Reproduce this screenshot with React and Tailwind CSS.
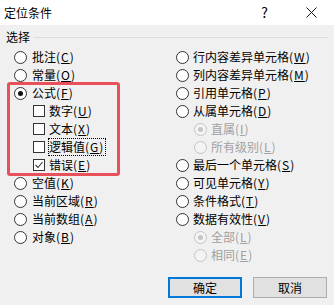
const font = { fontFamily: '"Noto Sans CJK SC", "Noto Sans", sans-serif' };

function Radio({ on, disabled }) {
  const ring = disabled ? 'border-[#c4c4c4] bg-[#f4f4f4]' : 'border-[#333] bg-white';
  return (
    <span className={`w-[13px] h-[13px] rounded-full border flex items-center justify-center shrink-0 ${ring}`}>
      {on && <span className={`w-[5px] h-[5px] rounded-full ${disabled ? 'bg-[#c4c4c4]' : 'bg-[#111]'}`} />}
    </span>
  );
}

function Check({ on }) {
  return (
    <span className="w-[12px] h-[12px] border border-[#333] bg-white shrink-0 flex items-center justify-center">
      {on && (
        <svg width="10" height="10" viewBox="0 0 10 10">
          <polyline points="1.5,5 4,7.5 8.5,2" fill="none" stroke="#333" strokeWidth="1.1" />
        </svg>
      )}
    </span>
  );
}

function Label({ text, k, disabled, focus }) {
  return (
    <span
      className={`text-[12px] leading-[16px] whitespace-nowrap ${disabled ? 'text-[#a0a0a0]' : 'text-black'} ${
        focus ? 'outline outline-1 outline-dotted outline-black outline-offset-0 pr-[1px]' : ''
      }`}
    >
      {text}
      <span className="tracking-[1px]">
        (<span className="underline">{k}</span>)
      </span>
    </span>
  );
}

function Row({ kind = 'radio', on, text, k, disabled, focus, indent = '', gap = 'gap-[5px]' }) {
  return (
    <div className={`h-[18px] flex items-center ${gap} ${indent}`}>
      {kind === 'radio' ? <Radio on={on} disabled={disabled} /> : <Check on={on} />}
      <Label text={text} k={k} disabled={disabled} focus={focus} />
    </div>
  );
}

export default function App() {
  return (
    <div className="w-[334px] h-[305px] bg-[#f0f0f0] flex flex-col overflow-hidden" style={font}>
      <div className="h-[25px] bg-white flex items-center pl-[4px] pr-[17px]">
        <span className="text-[12px] text-black">定位条件</span>
        <span className="ml-auto text-[14px] text-black mr-[38px]">?</span>
        <svg width="11" height="11" viewBox="0 0 11 11">
          <path d="M0.5 0.5 L10.5 10.5 M10.5 0.5 L0.5 10.5" stroke="#111" strokeWidth="1" />
        </svg>
      </div>

      <div className="pt-[3px] flex items-center h-[21px] pl-[6px] pr-[6px] gap-[4px]">
        <span className="text-[12px] text-black">选择</span>
        <span className="flex-1 h-px bg-[#dcdcdc]" />
      </div>

      <div className="flex mt-[2px]">
        <div className="relative w-[176px] pl-[14px]">
          <Row text="批注" k="C" />
          <Row text="常量" k="O" />
          <Row on text="公式" k="F" />
          <Row kind="check" text="数字" k="U" indent="pl-[19px]" gap="gap-[4px]" />
          <Row kind="check" text="文本" k="X" indent="pl-[19px]" gap="gap-[4px]" />
          <Row kind="check" text="逻辑值" k="G" focus indent="pl-[19px]" gap="gap-[4px]" />
          <Row kind="check" on text="错误" k="E" indent="pl-[19px]" gap="gap-[4px]" />
          <Row text="空值" k="K" />
          <Row text="当前区域" k="R" />
          <Row text="当前数组" k="A" />
          <Row text="对象" k="B" />
          <div className="absolute left-[7px] top-[34px] w-[113px] h-[94px] border-[3px] border-[#e8515a] rounded-[3px] pointer-events-none" />
        </div>
        <div className="flex-1">
          <Row text="行内容差异单元格" k="W" gap="gap-[4px]" />
          <Row text="列内容差异单元格" k="M" gap="gap-[4px]" />
          <Row text="引用单元格" k="P" gap="gap-[4px]" />
          <Row text="从属单元格" k="D" gap="gap-[4px]" />
          <Row on disabled text="直属" k="I" indent="pl-[18px]" gap="gap-[4px]" />
          <Row disabled text="所有级别" k="L" indent="pl-[18px]" gap="gap-[4px]" />
          <Row text="最后一个单元格" k="S" gap="gap-[4px]" />
          <Row text="可见单元格" k="Y" gap="gap-[4px]" />
          <Row text="条件格式" k="T" gap="gap-[4px]" />
          <Row text="数据有效性" k="V" gap="gap-[4px]" />
          <Row on disabled text="全部" k="L" indent="pl-[18px]" gap="gap-[4px]" />
          <Row disabled text="相同" k="E" indent="pl-[18px]" gap="gap-[4px]" />
        </div>
      </div>

      <div className="flex justify-end gap-[11px] pr-[7px] mt-[13px]">
        <button className="w-[74px] h-[21px] bg-[#e1e1e1] border-2 border-[#0078d7] text-[12px] text-black leading-none">
          确定
        </button>
        <button className="w-[74px] h-[21px] bg-[#e1e1e1] border border-[#adadad] text-[12px] text-black leading-none">
          取消
        </button>
      </div>
    </div>
  );
}
